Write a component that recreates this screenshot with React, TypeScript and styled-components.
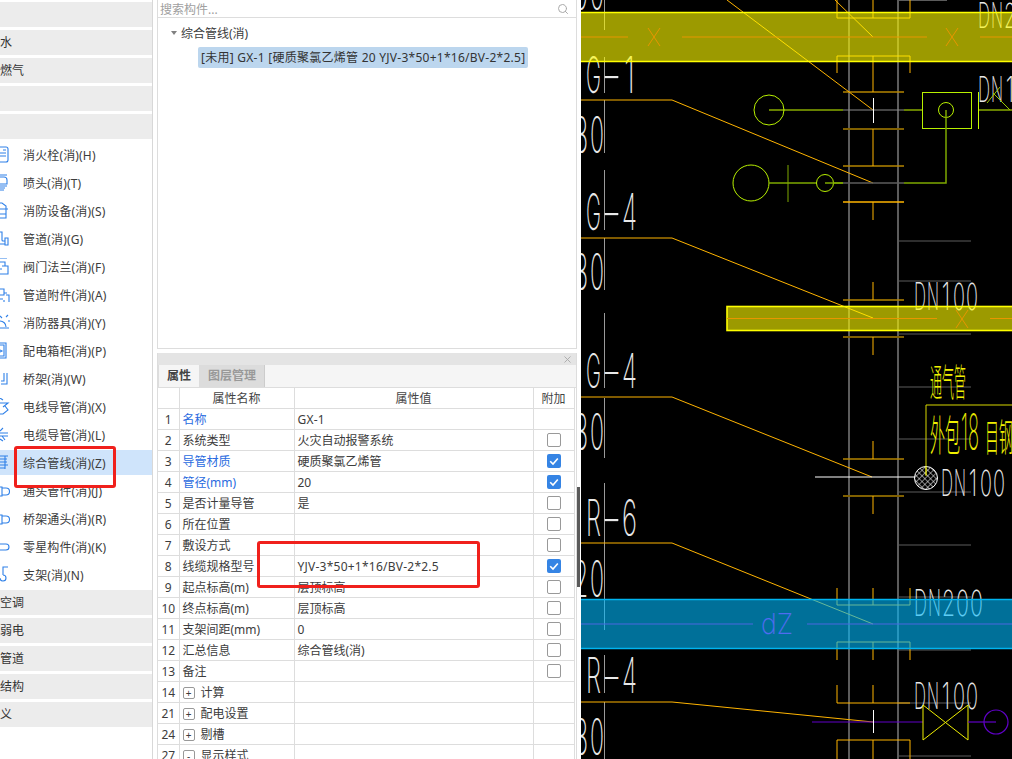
import styled, { createGlobalStyle } from "styled-components";
import { Search, X } from "lucide-react";

const GlobalStyle = createGlobalStyle`
  html, body {
    margin: 0;
    padding: 0;
    background: #fff;
  }
  body {
    font-family: "Noto Sans", "Noto Sans CJK SC", sans-serif;
    font-size: 12px;
    color: #333;
  }
`;

const headersTop = ["常用", "给排水", "采暖燃气", "电气", "消防"];
const headersBottom = ["通风空调", "智控弱电", "工业管道", "建筑结构", "自定义"];

const items = [
  { label: "消火栓(消)(H)", icon: "M0 1H6a2 2 0 0 1 2 2V14a2 2 0 0 1-2 2H0M0 7H6M0 10H6M3 4H6" },
  { label: "喷头(消)(T)", icon: "M0 1H7M0 3H4a3 3 0 0 1 3 3V10H0M0 12H7M0 14H5M0 16H4" },
  { label: "消防设备(消)(S)", icon: "M0 1H2L6 4V7H8M0 7H6M6 7V16H0M0 12H6" },
  { label: "管道(消)(G)", icon: "M0 2H2V10a1 1 0 0 0 1 1H5M5 8H8V15H5ZM0 14H5" },
  { label: "阀门法兰(消)(F)", icon: "M0 0H7M0 4H5V8M2 8H8V16H2M0 16H2M0 11H2" },
  { label: "管道附件(消)(A)", icon: "M0 3H4V9H0M4 7H7M6 9H9V16M4 14V16M0 13H3" },
  { label: "消防器具(消)(Y)", icon: "M0 7a6 6 0 0 1 6 6M0 14H9M6 3L8 1M8 7H10M0 2L2 4" },
  { label: "配电箱柜(消)(P)", icon: "M0 1H6V16H0M0 3H4V14H0M0 8L2 9L0 10" },
  { label: "桥架(消)(W)", icon: "M1 11H4V3M1 14H7V3" },
  { label: "电线导管(消)(X)", icon: "M0 0L3 2M0 5H8L3 9M5 8L8 12L3 16H0" },
  { label: "电缆导管(消)(L)", icon: "M0 5L3 2M0 7H8M0 10H8M2 10L5 14M0 13L3 15" },
  { label: "综合管线(消)(Z)", icon: "M0 2H8M0 5H7M0 8H7M0 11H8M5 2V15M0 14H5" },
  { label: "通头管件(消)(J)", icon: "M0 5H2V14H0M2 6H6a3 3 0 0 1 0 7H2M7 9.5h.1" },
  { label: "桥架通头(消)(R)", icon: "M0 5H2V14H0M2 6H6a3 3 0 0 1 0 7H2M7 9.5h.1" },
  { label: "零星构件(消)(K)", icon: "M0 6H6a3 3 0 0 1 0 6H0M7 9h.1" },
  { label: "支架(消)(N)", icon: "M8 1H3V9M3 9a3 3 0 1 1-3 3" },
];

type Row = {
  no: number;
  name: string;
  value?: string;
  blue?: boolean;
  wide?: boolean;
  check?: "on" | "off";
  fold?: "+" | "-";
};

const rows: Row[] = [
  { no: 1, name: "名称", value: "GX-1", blue: true, wide: true },
  { no: 2, name: "系统类型", value: "火灾自动报警系统", check: "off" },
  { no: 3, name: "导管材质", value: "硬质聚氯乙烯管", blue: true, check: "on" },
  { no: 4, name: "管径(mm)", value: "20", blue: true, check: "on" },
  { no: 5, name: "是否计量导管", value: "是", check: "off" },
  { no: 6, name: "所在位置", check: "off" },
  { no: 7, name: "敷设方式", check: "off" },
  { no: 8, name: "线缆规格型号", value: "YJV-3*50+1*16/BV-2*2.5", wide: true, check: "on" },
  { no: 9, name: "起点标高(m)", value: "层顶标高", check: "off" },
  { no: 10, name: "终点标高(m)", value: "层顶标高", check: "off" },
  { no: 11, name: "支架间距(mm)", value: "0", check: "off" },
  { no: 12, name: "汇总信息", value: "综合管线(消)", check: "off" },
  { no: 13, name: "备注", check: "off" },
  { no: 14, name: "计算", fold: "+" },
  { no: 21, name: "配电设置", fold: "+" },
  { no: 24, name: "剔槽", fold: "+" },
  { no: 27, name: "显示样式", fold: "-" },
];

const ORANGE = "#ffb400";
const MID = "#b48400";
const DIM = "#806000";
const GRAY = "#5c5c5c";
const LIME = "#b8f000";
const OLIVE = "#7ea800";
const PURPLE = "#6000c8";

// x1, y1, x2, y2, colour, width
type Seg = [number, number, number, number, string, number?];

const grayLines: Seg[] = [
  [849, 0, 849, 759, GRAY, 2],
  [898, 0, 898, 759, GRAY, 2],
  [898, 0, 947, 0, GRAY, 2],
  ...[241, 281, 334, 387, 439, 492, 545, 597, 650, 703, 756].map(
    (y): Seg => [898, y, 971, y, GRAY, 1.2]
  ),
  ...[
    [0, 30],
    [57, 93],
    [100, 153],
    [170, 230],
    [238, 290],
    [313, 388],
    [398, 458],
    [483, 543],
    [543, 630],
    [655, 693],
    [702, 759],
  ].map(([a, b]): Seg => [604.5, a, 604.5, b, "#9a9a9a", 1]),
];

const orangeLines: Seg[] = [
  [843, 92, 904, 92, MID, 1.5],
  [843, 129, 904, 129, DIM, 2],
  [843, 166, 904, 166, MID, 1.5],
  [843, 202, 904, 202, ORANGE, 1.5],
  [843, 300, 904, 300, MID, 1.5],
  [843, 337, 904, 337, DIM, 2],
  [843, 459, 904, 459, MID, 1.5],
  [843, 496, 904, 496, DIM, 2],
  [873, 0, 873, 18, ORANGE, 1],
  [873, 56, 873, 92, ORANGE, 1],
  [873, 129, 873, 166, ORANGE, 1],
  [873, 202, 873, 220, ORANGE, 1],
  [873, 282, 873, 300, ORANGE, 1],
  [873, 337, 873, 355, ORANGE, 1],
  [873, 441, 873, 459, ORANGE, 1],
  [873, 496, 873, 514, ORANGE, 1],
  [873, 588, 873, 605, ORANGE, 1],
  [873, 642, 873, 660, ORANGE, 1],
  [873, 685, 873, 703, ORANGE, 1],
  [873, 740, 873, 759, ORANGE, 1],
  [727, 0, 873, 110, ORANGE, 1],
  [835, 0, 873, 37, ORANGE, 1],
];

const orangePaths = [
  "M837 0V18H910V0",
  "M837 73V56H910V73",
  "M837 588V605H910V588",
  "M837 660V642H910V660",
  "M837 685V703H910",
  "M837 759V740H910V759",
  "M581 100H672L873 183",
  "M581 238H672L873 318",
  "M581 397H672L872 477",
  "M581 543H672L873 624",
  "M581 702H672L873 722",
];

// CAD text is long and narrow with wide gaps, so each character gets its own cell
const cadTexts = [
  { text: "00", x: 574, pitch: 16, w: 14, y: 10, h: 36 },
  { text: "G-1", x: 586, pitch: 18, w: 15, y: 93, h: 36 },
  { text: "30", x: 574, pitch: 16, w: 14, y: 153, h: 36 },
  { text: "G-4", x: 586, pitch: 18, w: 15, y: 230, h: 36 },
  { text: "30", x: 574, pitch: 16, w: 14, y: 290, h: 36 },
  { text: "G-4", x: 586, pitch: 18, w: 15, y: 388, h: 34 },
  { text: "30", x: 574, pitch: 16, w: 14, y: 450, h: 36 },
  { text: "R-6", x: 586, pitch: 18, w: 15, y: 536, h: 36 },
  { text: "20", x: 574, pitch: 16, w: 14, y: 597, h: 36 },
  { text: "R-4", x: 586, pitch: 18, w: 15, y: 693, h: 35 },
  { text: "30", x: 574, pitch: 16, w: 14, y: 755, h: 36 },
  { text: "DN200", x: 978, pitch: 13, w: 12, y: 28, h: 25 },
  { text: "DN100", x: 978, pitch: 13, w: 12, y: 102, h: 25 },
  { text: "DN100", x: 914, pitch: 13, w: 12, y: 310, h: 27 },
  { text: "DN100", x: 941, pitch: 13, w: 12, y: 496, h: 26 },
  { text: "DN200", x: 914, pitch: 14, w: 13, y: 616, h: 26 },
  { text: "DN100", x: 914, pitch: 13, w: 12, y: 709, h: 26 },
];

const cadHanzi = [
  { text: "通气管", x: 930, w: 36, y: 396, size: 38 },
  { text: "外包", x: 930, w: 30, y: 451, size: 42 },
  { text: "目钢丝", x: 985, w: 42, y: 451, size: 38 },
];

const glyphX = (ch: string, w: number) => (ch === "1" ? w * 0.15 : ch === "-" ? -w * 0.2 : 0);
const glyphW = (ch: string, w: number) => (ch === "1" ? w * 0.7 : ch === "-" ? w * 1.4 : w);

const renderSeg = (s: Seg, i: number) => (
  <line key={i} x1={s[0]} y1={s[1]} x2={s[2]} y2={s[3]} stroke={s[4]} strokeWidth={s[5] ?? 1} />
);

const CadDrawing = () => (
  <CadSvg viewBox="581 0 431 759" width={431} height={759}>
    <defs>
      <pattern id="hatch" width="4" height="4" patternUnits="userSpaceOnUse" patternTransform="rotate(45)">
        <path d="M0 0H4M0 0V4" stroke="#fff" strokeWidth="1" />
      </pattern>
    </defs>
    {grayLines.map(renderSeg)}
    {orangeLines.map(renderSeg)}
    {orangePaths.map((d) => (
      <path key={d} d={d} fill="none" stroke={ORANGE} strokeWidth={1} />
    ))}

    {cadTexts.map((t, i) =>
      t.text.split("").map((ch, j) => (
        <CadLabel
          key={`${i}-${j}`}
          x={t.x + j * t.pitch + glyphX(ch, t.w)}
          y={t.y}
          fontSize={t.h / 0.72}
          textLength={glyphW(ch, t.w)}
          lengthAdjust="spacingAndGlyphs"
        >
          {ch}
        </CadLabel>
      ))
    )}
    {cadHanzi.map((t) => (
      <CadHanzi key={t.text} x={t.x} y={t.y} fontSize={t.size} textLength={t.w} lengthAdjust="spacingAndGlyphs">
        {t.text}
      </CadHanzi>
    ))}
    <CadLabel x={961} y={450} fontSize={50} textLength={18} lengthAdjust="spacingAndGlyphs" $fill="#e8e800">
      18
    </CadLabel>

    {/* green risers */}
    <circle cx={769} cy={110} r={15} fill="none" stroke={LIME} />
    <line x1={769} y1={110} x2={843} y2={110} stroke="#ccff00" />
    <line x1={843} y1={110} x2={904} y2={110} stroke="#8a8a8a" />
    <line x1={904} y1={110} x2={922} y2={110} stroke="#ccff00" />
    <rect x={922.5} y={92.5} width={49} height={36} fill="none" stroke={LIME} />
    <circle cx={946} cy={110} r={7.5} fill="none" stroke={LIME} />
    <path d="M946 110V183H904" fill="none" stroke={OLIVE} strokeWidth={1.5} />
    <path d="M978.5 92V129M979 110H1012" fill="none" stroke="#ccff00" />
    <path d="M993 93L1010 110M987 103L1000 87" fill="none" stroke="#9ac800" />
    <circle cx={751} cy={183} r={18} fill="none" stroke={LIME} />
    <line x1={769} y1={183} x2={843} y2={183} stroke={OLIVE} strokeWidth={1.5} />
    <line x1={843} y1={183} x2={904} y2={183} stroke="#5c5c5c" strokeWidth={1.5} />
    <line x1={788} y1={165} x2={788} y2={202} stroke={OLIVE} />
    <circle cx={825} cy={183} r={8.5} fill="#000" stroke={LIME} />
    <line x1={825} y1={183} x2={843} y2={183} stroke={OLIVE} strokeWidth={1.5} />
    <line x1={873.5} y1={98} x2={873.5} y2={123} stroke="#fff" />

    {/* hatched riser */}
    <path d="M926 475V405H1012" fill="none" stroke="#d8d800" />
    <line x1={815} y1={477} x2={915} y2={477} stroke="#fff" />
    <circle cx={926} cy={478} r={11.5} fill="url(#hatch)" stroke="#fff" />
    <line x1={926} y1={466} x2={926} y2={476} stroke="#e8e800" />

    {/* valve */}
    <line x1={812} y1={722} x2={923} y2={722} stroke={PURPLE} strokeWidth={1.2} />
    <line x1={873.5} y1={710} x2={873.5} y2={733} stroke="#fff" />
    <path d="M923 705V740L968 705V740Z" fill="none" stroke="#f0f000" />
    <line x1={968} y1={722} x2={996} y2={722} stroke={PURPLE} strokeWidth={1.2} />
    <circle cx={996} cy={722} r={12} fill="none" stroke={PURPLE} strokeWidth={1.2} />

    {/* yellow ducts */}
    <rect x={575} y={12} width={445} height={50} fill="rgba(255,252,0,0.61)" />
    <path d="M581 12.5H1012M581 61.5H1012" stroke="#ffff00" strokeWidth={1.6} />
    <path d="M581 37H628M682 37H927M980 37H1012" stroke="#e89600" />
    <path d="M648 28L660 46M660 28L648 46M946 28L958 46M958 28L946 46" stroke="#e89600" />
    <rect x={727} y={306.5} width={300} height={24} fill="rgba(255,252,0,0.61)" stroke="#ffff00" strokeWidth={1.6} />
    <path d="M727 318.5H937M990 318.5H1012" stroke="#e89600" />
    <path d="M956 310L968 328M968 310L956 328" stroke="#e89600" />

    {/* blue duct */}
    <rect x={575} y={599} width={445} height={50} fill="rgba(0,186,255,0.6)" />
    <path d="M581 599.5H1012M581 648.5H1012" stroke="#00b4f0" strokeWidth={1.6} />
    <path d="M581 624H753M807 624H1012" stroke="#4a66e0" />
    <CadLabel x={761} y={634} fontSize={29} textLength={32} lengthAdjust="spacingAndGlyphs" $fill="#4f6cf0" $weight={250}>
      dZ
    </CadLabel>
  </CadSvg>
);

export default function App() {
  return (
    <Page>
      <GlobalStyle />
      <Sidebar>
        {headersTop.map((h) => (
          <GroupHeader key={h}>{h}</GroupHeader>
        ))}
        {items.map((it) => (
          <Item key={it.label} $active={it.label.startsWith("综合管线")}>
            <ItemIcon viewBox="0 0 10 18" width={10} height={18}>
              <path d={it.icon} />
            </ItemIcon>
            {it.label}
          </Item>
        ))}
        {headersBottom.map((h) => (
          <GroupHeader key={h}>{h}</GroupHeader>
        ))}
      </Sidebar>

      <Middle>
        <TreePanel>
          <SearchBar>
            <SearchText>搜索构件...</SearchText>
            <Search size={12} color="#aaa" strokeWidth={2} />
          </SearchBar>
          <TreeRoot>
            <Arrow />
            综合管线(消)
          </TreeRoot>
          <TreeLeaf>[未用] GX-1 [硬质聚氯乙烯管 20 YJV-3*50+1*16/BV-2*2.5]</TreeLeaf>
        </TreePanel>

        <PropsPanel>
          <TitleBar>
            <X size={11} color="#aaa" strokeWidth={2} />
          </TitleBar>
          <Tabs>
            <Tab $on>属性</Tab>
            <Tab>图层管理</Tab>
          </Tabs>
          <Table>
            <colgroup>
              <col width={21} />
              <col width={115} />
              <col width={239} />
              <col width={41} />
            </colgroup>
            <thead>
              <tr>
                <HeadCell />
                <HeadCell>属性名称</HeadCell>
                <HeadCell>属性值</HeadCell>
                <HeadCell>附加</HeadCell>
              </tr>
            </thead>
            <tbody>
              {rows.map((r) => (
                <tr key={r.no}>
                  <NoCell>{r.no}</NoCell>
                  <NameCell $blue={r.blue}>
                    {r.fold && <Fold>{r.fold}</Fold>}
                    {r.name}
                  </NameCell>
                  <ValueCell $wide={r.wide}>{r.value}</ValueCell>
                  <CheckCell>
                    {r.check && (
                      <Check $on={r.check === "on"}>
                        {r.check === "on" && (
                          <svg viewBox="0 0 14 14" width={14} height={14}>
                            <path d="M3.2 7.2L6 10L10.8 4.4" fill="none" stroke="#fff" strokeWidth="1.6" />
                          </svg>
                        )}
                      </Check>
                    )}
                  </CheckCell>
                </tr>
              ))}
            </tbody>
          </Table>
        </PropsPanel>
      </Middle>

      <Canvas>
        <CadDrawing />
      </Canvas>

      <SplitHandle />
      <RedBoxSide />
      <RedBoxTable />
    </Page>
  );
}

const Page = styled.div`
  position: relative;
  width: 1012px;
  height: 759px;
  overflow: hidden;
  display: flex;
  background: #fff;
`;

const Sidebar = styled.div`
  width: 153px;
  height: 759px;
  flex: none;
  padding-top: 2px;
  box-sizing: border-box;
  border-right: 1px solid #d8d8d8;
  overflow: hidden;
  margin-right: 4px;
`;

const GroupHeader = styled.div`
  height: 25px;
  line-height: 25px;
  margin-bottom: 3px;
  text-indent: -24px;
  background: #ececec;
  font-size: 12px;
  color: #333;
  white-space: nowrap;
`;

const Item = styled.div<{ $active?: boolean }>`
  height: 25px;
  margin-bottom: 3px;
  display: flex;
  align-items: center;
  gap: 13px;
  background: ${(p) => (p.$active ? "#cfe4fb" : "transparent")};
  color: #3c3c3c;
  letter-spacing: 0.15px;
  white-space: nowrap;
`;

const ItemIcon = styled.svg`
  flex: none;
  fill: none;
  stroke: #2f80e8;
  stroke-width: 1.1;
`;

const Middle = styled.div`
  width: 420px;
  flex: none;
  display: flex;
  flex-direction: column;
  gap: 4px;
`;

const TreePanel = styled.div`
  height: 349px;
  flex: none;
  box-sizing: border-box;
  border: 1px solid #ddd;
  border-top: 0;
`;

const SearchBar = styled.div`
  height: 17px;
  display: flex;
  align-items: center;
  justify-content: space-between;
  padding: 0 7px 0 2px;
  border-bottom: 1px solid #ddd;
`;

const SearchText = styled.span`
  color: #a0a0a0;
`;

const TreeRoot = styled.div`
  display: flex;
  align-items: center;
  gap: 4px;
  height: 20px;
  margin-top: 5px;
  padding-left: 13px;
  color: #3c3c3c;
`;

const Arrow = styled.span`
  width: 0;
  height: 0;
  border-left: 3px solid transparent;
  border-right: 3px solid transparent;
  border-top: 4px solid #808080;
`;

const TreeLeaf = styled.div`
  width: fit-content;
  height: 21px;
  line-height: 21px;
  margin: 4px 0 0 40px;
  padding: 0 3px;
  background: #bcd6ee;
  border-radius: 2px;
  color: #333;
  letter-spacing: 0.26px;
  white-space: nowrap;
`;

const PropsPanel = styled.div`
  flex: 1;
  min-height: 0;
  display: flex;
  flex-direction: column;
  border-left: 1px solid #ddd;
  border-right: 1px solid #ddd;
`;

const TitleBar = styled.div`
  height: 12px;
  flex: none;
  display: flex;
  align-items: center;
  justify-content: flex-end;
  padding-right: 3px;
  background: #e4e4e4;
`;

const Tabs = styled.div`
  height: 23px;
  flex: none;
  display: flex;
  background: #f5f5f5;
  border-bottom: 1px solid #ddd;
  box-sizing: border-box;
`;

const Tab = styled.div<{ $on?: boolean }>`
  padding: 0 8px;
  line-height: 22px;
  font-weight: 700;
  color: ${(p) => (p.$on ? "#444" : "#999")};
  background: ${(p) => (p.$on ? "#f5f5f5" : "#dcdcdc")};
  border-right: 1px solid #ccc;
  border-left: 1px solid ${(p) => (p.$on ? "#ddd" : "transparent")};
  margin-left: ${(p) => (p.$on ? "0" : "-1px")};
`;

const Table = styled.table`
  width: 416px;
  table-layout: fixed;
  border-collapse: collapse;
  flex: none;
  margin: 0;
`;

const HeadCell = styled.th`
  height: 20px;
  padding: 0;
  font-weight: 400;
  color: #444;
  text-align: center;
  border-right: 1px solid #ddd;
  border-bottom: 1px solid #ddd;
`;

const Cell = styled.td`
  height: 20px;
  padding: 0 0 0 3px;
  color: #3c3c3c;
  border-right: 1px solid #ddd;
  border-bottom: 1px solid #ddd;
  white-space: nowrap;
  overflow: hidden;
`;

const NoCell = styled(Cell)`
  padding: 0;
  text-align: center;
`;

const NameCell = styled(Cell)<{ $blue?: boolean }>`
  color: ${(p) => (p.$blue ? "#2a6be0" : "#3c3c3c")};
`;

const ValueCell = styled(Cell)<{ $wide?: boolean }>`
  letter-spacing: ${(p) => (p.$wide ? "0.24px" : "0")};
`;

const CheckCell = styled(Cell)`
  padding: 0;
  text-align: center;
`;

const Check = styled.span<{ $on?: boolean }>`
  display: block;
  width: 14px;
  height: 14px;
  margin: 0 auto;
  box-sizing: border-box;
  border-radius: 2px;
  border: ${(p) => (p.$on ? "0" : "1px solid #999")};
  background: ${(p) => (p.$on ? "#3584e4" : "#fff")};
`;

const Fold = styled.span`
  display: inline-flex;
  align-items: center;
  justify-content: center;
  width: 12px;
  height: 12px;
  box-sizing: border-box;
  margin: -2px 6px 0 0;
  border: 1px solid #999;
  border-radius: 2px;
  font-size: 10px;
  line-height: 1;
  vertical-align: middle;
`;

const Canvas = styled.div`
  width: 431px;
  height: 759px;
  flex: none;
  margin-left: 4px;
  background: #000;
`;

const CadSvg = styled.svg`
  display: block;
`;

const CadLabel = styled.text<{ $fill?: string; $weight?: number }>`
  font-family: Inter, Roboto, "Liberation Sans", sans-serif;
  font-weight: ${(p) => p.$weight ?? 200};
  fill: ${(p) => p.$fill ?? "#e8e8e8"};
`;

const CadHanzi = styled.text`
  font-family: "Noto Sans CJK SC", sans-serif;
  font-weight: 300;
  fill: #f0f000;
`;

const SplitHandle = styled.div`
  position: absolute;
  left: 577px;
  top: 487px;
  width: 3px;
  height: 100px;
  background: #5a5a5a;
`;

const RedBox = styled.div`
  position: absolute;
  box-sizing: border-box;
  border: 3px solid #f0201c;
  border-radius: 3px;
  pointer-events: none;
`;

const RedBoxSide = styled(RedBox)`
  left: 14px;
  top: 446px;
  width: 102px;
  height: 42px;
`;

const RedBoxTable = styled(RedBox)`
  left: 257px;
  top: 541px;
  width: 223px;
  height: 47px;
`;
